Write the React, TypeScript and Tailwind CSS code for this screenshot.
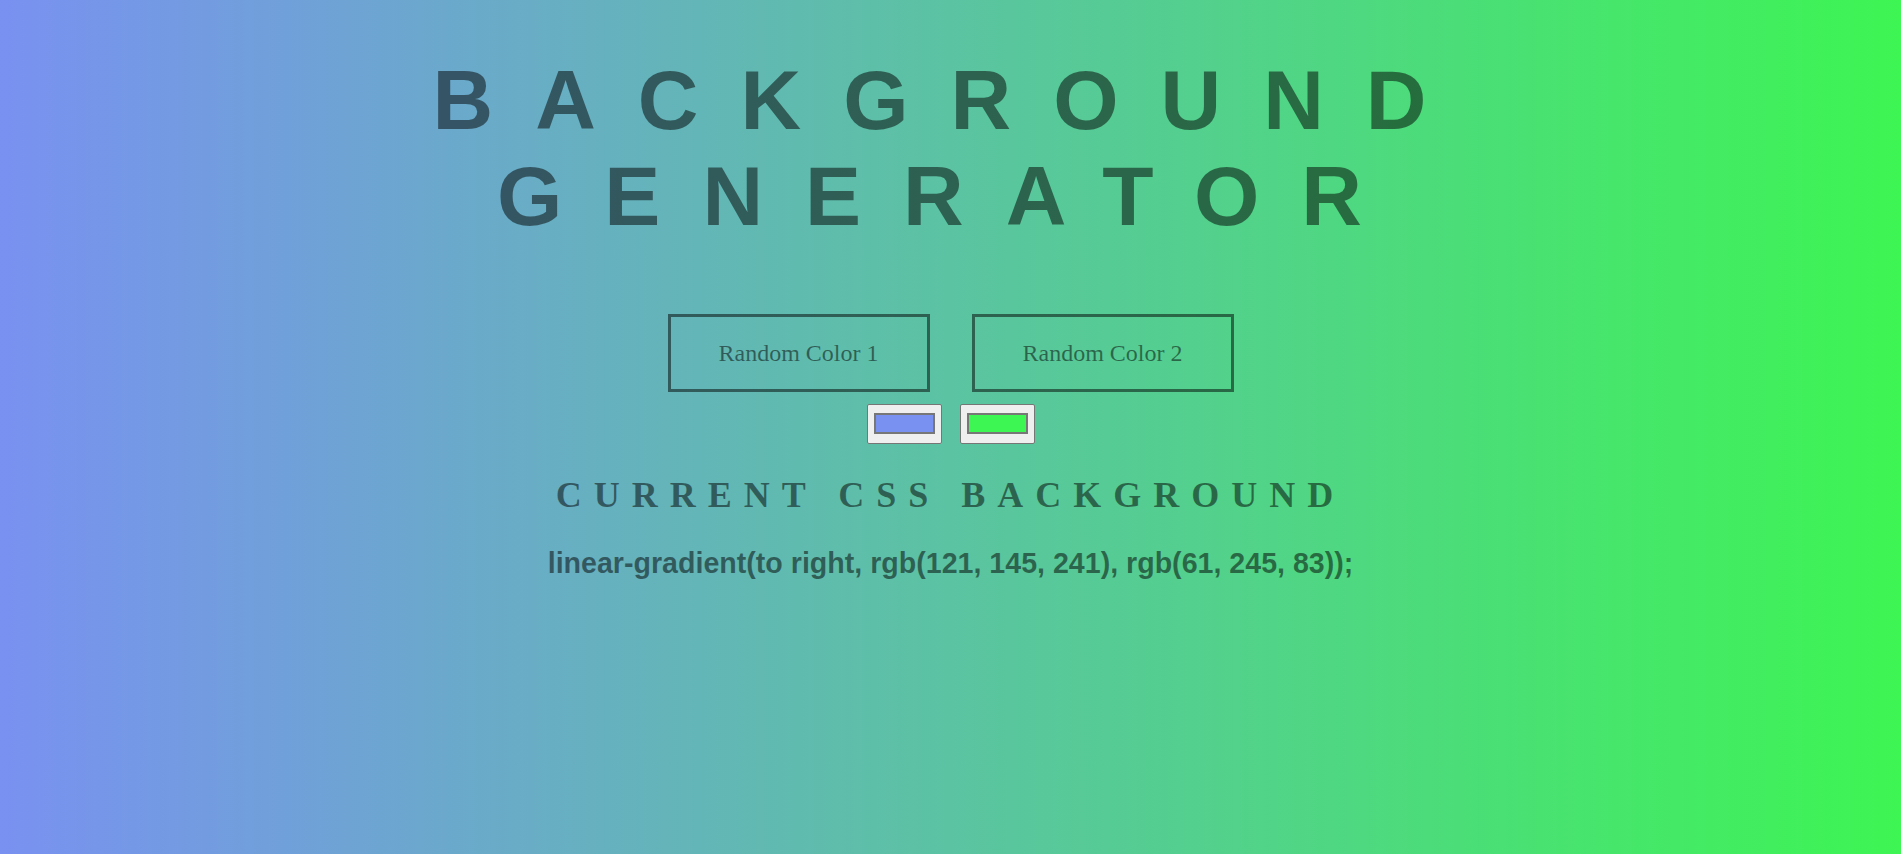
import { useState } from "react";

function randomHex() {
  const n = Math.floor(Math.random() * 0xffffff);
  return "#" + n.toString(16).padStart(6, "0");
}

function hexToRgb(hex: string) {
  const n = parseInt(hex.slice(1), 16);
  return `rgb(${(n >> 16) & 255}, ${(n >> 8) & 255}, ${n & 255})`;
}

export default function App() {
  const [color1, setColor1] = useState("#7991f1");
  const [color2, setColor2] = useState("#3df553");

  const gradient = `linear-gradient(to right, ${hexToRgb(color1)}, ${hexToRgb(color2)})`;

  return (
    <div
      className="min-h-screen flex flex-col items-center text-center pt-[52px] text-black/50"
      style={{ background: gradient }}
    >
      {/* Title */}
      <h1 className="font-['Liberation_Sans',Arial,sans-serif] font-bold text-[84px] leading-[96px] tracking-[0.5em]">
        BACKGROUND
        <br />
        GENERATOR
      </h1>

      {/* Random buttons */}
      <div className="mt-[70px] flex gap-[42px]">
        <button
          onClick={() => setColor1(randomHex())}
          className="w-[262px] h-[78px] border-[3px] border-black/50 font-['Liberation_Serif','Times_New_Roman',serif] text-[24px] leading-[28px] cursor-pointer"
        >
          Random Color 1
        </button>
        <button
          onClick={() => setColor2(randomHex())}
          className="w-[262px] h-[78px] border-[3px] border-black/50 font-['Liberation_Serif','Times_New_Roman',serif] text-[24px] leading-[28px] cursor-pointer"
        >
          Random Color 2
        </button>
      </div>

      {/* Color pickers */}
      <div className="mt-[12px] flex gap-[18px]">
        <input
          type="color"
          value={color1}
          onChange={(e) => setColor1(e.target.value)}
          className="w-[75px] h-[40px] bg-[#efefef] border border-[#767676] rounded-[2px] px-[6px] pt-[8px] pb-[9px] cursor-pointer [&::-webkit-color-swatch-wrapper]:p-0 [&::-webkit-color-swatch]:border-2 [&::-webkit-color-swatch]:border-solid [&::-webkit-color-swatch]:border-[#777777] [&::-webkit-color-swatch]:rounded-none"
        />
        <input
          type="color"
          value={color2}
          onChange={(e) => setColor2(e.target.value)}
          className="w-[75px] h-[40px] bg-[#efefef] border border-[#767676] rounded-[2px] px-[6px] pt-[8px] pb-[9px] cursor-pointer [&::-webkit-color-swatch-wrapper]:p-0 [&::-webkit-color-swatch]:border-2 [&::-webkit-color-swatch]:border-solid [&::-webkit-color-swatch]:border-[#777777] [&::-webkit-color-swatch]:rounded-none"
        />
      </div>

      <h3 className="mt-[31px] font-['Liberation_Serif','Times_New_Roman',serif] font-bold text-[36px] leading-[40px] tracking-[12px]">
        CURRENT CSS BACKGROUND
      </h3>

      <p className="mt-[32px] font-['Liberation_Sans',Arial,sans-serif] font-bold text-[28.6px] leading-[33px]">
        {gradient};
      </p>
    </div>
  );
}
